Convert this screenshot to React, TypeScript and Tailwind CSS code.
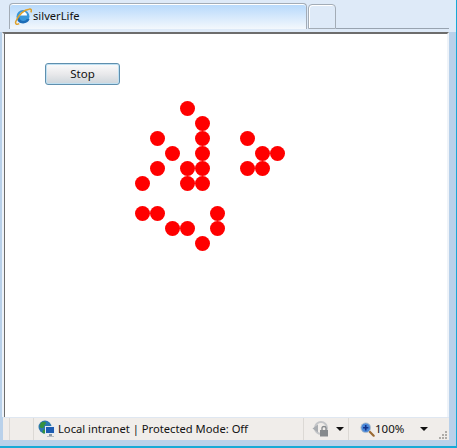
// App.tsx
const rows = [
  [3],
  [4],
  [1, 4, 7],
  [2, 4, 8, 9],
  [1, 3, 4, 7, 8],
  [0, 3, 4],
  [],
  [0, 1, 5],
  [2, 3, 5],
  [4],
];
const cols = [0, 1, 2, 3, 4, 5, 6, 7, 8, 9];

function IeIcon() {
  return (
    <svg width="18" height="19" viewBox="0 0 18 19" className="shrink-0">
      <circle cx="9" cy="9.500" r="6.500" fill="#3a97da" />
      <path d="M5.500 8.500h7.500c0-2.300-1.500-3.800-3.700-3.800S5.500 6.200 5.500 8.500Z" fill="#ffffff" />
      <path d="M5.500 10.500c.2 2.200 1.800 3.500 3.800 3.500 1.600 0 2.800-.7 3.500-2h2.800c-1 2.900-3.500 4.400-6.500 4.400-3.800 0-6.300-2.500-6.300-5.900" fill="#1c6cb6" />
      <path d="M15 2.200C10.500 2.500 4.500 7.500 1.800 14.500c-.8 2.500.8 3.500 3.400 2.100M15 2.200c2.100-.6 3 .7 1.800 3.200" fill="none" stroke="#dea12a" strokeWidth="1.500" />
    </svg>
  );
}

function ZoneIcon() {
  return (
    <svg width="18" height="18" viewBox="0 0 18 18" className="shrink-0">
      <circle cx="7" cy="7" r="6.500" fill="#2b78b0" />
      <path d="M3 2.500c2-1 4-1 5 0 0 2-2 2-2 4S3 8.500 1.500 6.500Z" fill="#35923f" />
      <path d="M5 10c2-1 3 0 3 1.500S6.500 13.500 5.500 13.500 4 11.500 5 10Z" fill="#35923f" />
      <rect x="7.500" y="6.500" width="9" height="7" fill="#1d5cb2" stroke="#e4ebf2" />
      <rect x="11" y="14" width="3" height="2" fill="#8f9aa5" />
      <rect x="9" y="16" width="7" height="1" fill="#b4bcc4" />
    </svg>
  );
}

function LockIcon() {
  return (
    <svg width="18" height="18" viewBox="0 0 18 18" className="shrink-0">
      <circle cx="9" cy="8" r="6" fill="none" stroke="#c4c6c9" strokeWidth="2" />
      <path d="M0.500 8.500l5.500-4v8Z" fill="#a9adb1" />
      <rect x="8" y="10" width="8" height="6.500" fill="#85898d" />
      <path d="M10 10V8c0-2 4-2 4 0v2" fill="none" stroke="#85898d" strokeWidth="1.300" />
    </svg>
  );
}

function ZoomIcon() {
  return (
    <svg width="15" height="15" viewBox="0 0 17 17" className="shrink-0">
      <path d="M10.500 10.500l5 5" stroke="#9a6a33" strokeWidth="2.500" strokeLinecap="round" />
      <circle cx="6.500" cy="6.500" r="5.500" fill="#4a88d8" stroke="#b6c0ca" />
      <path d="M6.500 3.500v6M3.500 6.500h6" stroke="#12328a" strokeWidth="1.800" />
    </svg>
  );
}

function Grip() {
  return (
    <svg width="8" height="8" viewBox="0 0 8 8" className="mb-[1px] mr-[2px] shrink-0 self-end">
      <path d="M6 0h2v2H6ZM6 3h2v2H6ZM3 3h2v2H3ZM6 6h2v2H6ZM3 6h2v2H3ZM0 6h2v2H0Z" fill="#aeaca8" />
    </svg>
  );
}

function Caret() {
  return <div className="h-0 w-0 shrink-0 border-x-[4px] border-t-[4px] border-x-transparent border-t-[#111111]" />;
}

export default function App() {
  return (
    <div className="flex h-[448px] w-[457px] flex-col overflow-hidden border-b-2 border-r border-[#17a9d6] bg-[#b9d1ea] font-['Noto_Sans',sans-serif] text-[#111111]">
      {/* Barra de pestañas */}
      <div className="flex h-[29px] shrink-0 items-end bg-[#deeaf8] pl-[9px] pr-[7px]">
        <div className="flex h-[26px] w-[298px] items-center gap-[1px] rounded-t-[4px] border border-b-0 border-[#a3acb6] bg-gradient-to-b from-[#b5d8fb] to-[#f4f8fc] pl-[4px] text-[11.200px] shadow-[inset_0_1px_0_#ffffff]">
          <IeIcon />
          <span>silverLife</span>
        </div>
        <div className="ml-[1px] h-[25px] w-[28px] rounded-t-[4px] border border-[#a3acb6] bg-[#deeaf8] shadow-[inset_1px_1px_0_#ffffff]" />
        <div className="h-[1px] flex-1 bg-[#98a3b0]" />
      </div>
      <div className="h-[3px] shrink-0 bg-[#deeaf8]" />

      {/* Contenido */}
      <div className="ml-[2px] mr-[7px] flex min-h-0 flex-1 flex-col border-x-[2px] border-t-[2px] border-x-[#eef3f9] border-t-[#6d6d6d] bg-white shadow-[inset_1px_0_0_#6d6d6d]">
        <div className="pl-[41px] pt-[29px]">
          <button className="flex h-[22px] w-[75px] items-center justify-center rounded-[3px] border border-[#5f8fae] bg-gradient-to-b from-[#fbfbfc] via-[#e9e9eb] to-[#cdd5db] text-[11.500px] shadow-[inset_0_0_0_1px_#bfe0f2]">
            Stop
          </button>
        </div>
        <div className="ml-[131px] mt-[16px] flex flex-col">
          {rows.map((row, r) => (
            <div key={r} className="flex h-[15px]">
              {cols.map((c) => (
                <div key={c} className={`h-[15px] w-[15px] rounded-full ${row.includes(c) ? "bg-[#ff0000]" : ""}`} />
              ))}
            </div>
          ))}
        </div>
      </div>

      {/* Barra de estado */}
      <div className="ml-[3px] mr-[7px] flex h-[23px] shrink-0 items-center border-t border-[#dfe7f1] bg-[#f0edea] text-[11.200px]">
        <div className="h-full w-[7px] shrink-0 border-r border-[#dcd9d5]" />
        <div className="h-full w-[24px] shrink-0 border-r border-[#dcd9d5]" />
        <div className="flex w-[269px] shrink-0 items-center gap-[2px] pl-[4px]">
          <ZoneIcon />
          <span className="whitespace-nowrap">Local intranet | Protected Mode: Off</span>
        </div>
        <div className="flex h-full w-[46px] shrink-0 items-center gap-[6px] border-x border-[#dcd9d5] pl-[8px]">
          <LockIcon />
          <Caret />
        </div>
        <div className="flex items-center pl-[11px]">
          <ZoomIcon />
          <span className="text-[11.500px]">100%</span>
          <div className="ml-[16px]">
            <Caret />
          </div>
        </div>
        <div className="ml-auto flex h-full">
          <Grip />
        </div>
      </div>
      <div className="h-[6px] shrink-0" />
    </div>
  );
}
